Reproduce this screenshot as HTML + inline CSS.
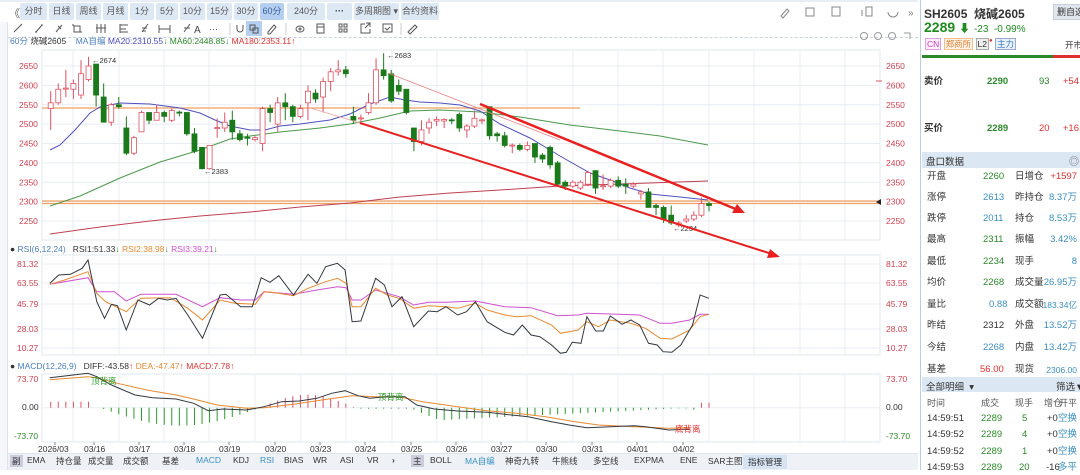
<!DOCTYPE html>
<html><head><meta charset="utf-8">
<style>
*{margin:0;padding:0;box-sizing:border-box}
body{width:1080px;height:470px;overflow:hidden;background:#fff;font-family:"Liberation Sans","Noto Sans CJK SC",sans-serif;font-size:9px;color:#333;position:relative}
.abs{position:absolute;white-space:nowrap}
.btn{position:absolute;top:3px;height:17px;background:#dde8f5;border-radius:2px;font-size:9px;color:#555;text-align:center;line-height:17px;white-space:nowrap}
.btn.sel{background:#b5cff0;color:#3a5f9a}
.rp{position:absolute;left:920px;top:0;width:160px;height:470px;border-left:1px solid #b9cde6}
.row{position:absolute;left:6px;width:150px;height:14px;font-size:9.5px;line-height:14px;white-space:nowrap}
.row span{position:absolute;top:0;white-space:nowrap;line-height:14px}
.row .rt{right:0}
.g{color:#2a8a2a}.r{color:#e03030}.b{color:#3a90c0}
.bt{position:absolute;top:455px;font-size:8.5px;white-space:nowrap}
</style></head><body>
<div class="abs" style="left:0;top:0;width:918px;height:2px;background:#e8eef6"></div>
<div class="abs" style="left:9px;top:5px;font-size:11px;color:#666">《</div>
<div class="btn" style="left:20px;width:27px">分时</div>
<div class="btn" style="left:49px;width:25px">日线</div>
<div class="btn" style="left:76px;width:25px">周线</div>
<div class="btn" style="left:103px;width:25px">月线</div>
<div class="btn" style="left:130px;width:24px">1分</div>
<div class="btn" style="left:156px;width:22px">5分</div>
<div class="btn" style="left:180px;width:25px">10分</div>
<div class="btn" style="left:207px;width:25px">15分</div>
<div class="btn" style="left:234px;width:24px">30分</div>
<div class="btn sel" style="left:260px;width:24px">60分</div>
<div class="btn" style="left:287px;width:38px">240分</div>
<div class="btn" style="left:327px;width:25px;font-weight:bold;color:#333">···</div>
<div class="btn" style="left:354px;width:45px">多周期图 ▾</div>
<div class="btn" style="left:401px;width:38px">合约资料</div>
<div class="abs" style="left:0;top:22px;width:8px;height:448px;background:#f4f6f9;border-right:1px solid #dde4ee"></div>
<svg class="abs" style="left:8px;top:20px" width="420" height="18" stroke="#555" fill="none" stroke-width="1">
<line x1="6" y1="12" x2="14" y2="4"/>
<path d="M28 12l6-7M27 12h2M33 5h2"/>
<path d="M48 12l6-7M50 6l3 3"/>
<rect x="66" y="6" width="6" height="6"/><path d="M64 5h2M72 12h2"/>
<path d="M89 4v9M93 4v9M97 4v9M88 8h10"/>
<path d="M112 5h8M112 9h6M112 12h8M112 4v9"/>
<path d="M134 12l6-8M134 8h5M134 11h4"/>
<path d="M151 5v8M162 5v8M151 9h11"/>
<path d="M176 12l6-8M176 8h6"/>
<text x="186" y="13" fill="#444" stroke="none" font-size="10">A</text>
<text x="201" y="12" fill="#444" stroke="none" font-size="9">···</text>
<line x1="222" y1="3" x2="222" y2="15" stroke="#ccc"/>
<path d="M229 5v4a3 3 0 006 0V5"/>
<rect x="238" y="1" width="16" height="15" fill="#b5cff0" stroke="none"/><rect x="242" y="5" width="5" height="5"/><rect x="245" y="8" width="5" height="5"/>
<path d="M260 12l6-7 2 2-6 7h-2z"/>
<line x1="278" y1="3" x2="278" y2="15" stroke="#ccc"/>
<ellipse cx="292" cy="9" rx="4" ry="3"/><circle cx="292" cy="9" r="1"/>
<rect x="309" y="4" width="7" height="9"/><path d="M309 7h7"/>
<rect x="331" y="4" width="3" height="3"/><rect x="336" y="4" width="3" height="3"/><rect x="331" y="9" width="3" height="3"/><rect x="336" y="9" width="3" height="3"/>
<path d="M357 4h-4v9h9v-4M358 3h4v4M362 3l-5 5"/>
<rect x="375" y="4" width="9" height="8"/><path d="M377 8l2 2 3-3"/>
<line x1="393" y1="3" x2="393" y2="15" stroke="#ccc"/>
<path d="M400 12l7-7 2 2-7 7z"/>
</svg>
<svg class="abs" style="left:776px;top:4px" width="142" height="16" stroke="#888" fill="none">
<path d="M5 12l6-7 2 2-6 7z"/><rect x="30" y="4" width="8" height="8"/><rect x="56" y="3" width="8" height="9"/><path d="M90 3h6v9h-6zM86 6v6"/>
<path d="M112 8a5 5 0 1010 0"/><text x="132" y="12" font-size="10" fill="#777" stroke="none">»</text>
</svg>
<div class="abs" style="left:8px;top:37px;width:910px;border-top:1px dashed #c8d2e0"></div>
<div class="abs" style="left:10px;top:35px;font-size:8.5px"><span style="color:#4a7fc0">60分</span> 烧碱2605 &nbsp; &nbsp;<span style="color:#4a7fc0">MA自编</span> <span style="color:#4a4abf">MA20:2310.55</span><span class="g">↓</span> <span class="g">MA60:2448.85</span><span class="g">↓</span> <span class="r">MA180:2353.11</span><span class="r">↑</span></div>
<svg class="abs" style="left:858px;top:30px" width="60" height="12" stroke="#999" fill="none"><circle cx="6" cy="6" r="3.5"/><circle cx="20" cy="6" r="3.5"/><circle cx="34" cy="6" r="3.5"/><path d="M46 3h6v6"/></svg>

<svg id="ch" class="abs" style="left:0;top:0" width="918" height="470"></svg>

<div class="abs" style="left:10px;top:244px;font-size:8.5px"><span style="color:#333">●</span> <span style="color:#4a7fc0">RSI(6,12,24)</span> &nbsp; RSI1:51.33<span class="g">↓</span> <span style="color:#e88a30">RSI2:38.98</span><span class="g">↓</span> <span style="color:#d050d0">RSI3:39.21</span><span class="g">↓</span></div>
<div class="abs" style="left:10px;top:361px;font-size:8.5px"><span style="color:#333">●</span> <span style="color:#4a7fc0">MACD(12,26,9)</span> &nbsp; DIFF:-43.58<span class="r">↑</span> <span style="color:#e88a30">DEA:-47.47</span><span class="r">↑</span> <span class="r">MACD:7.78↑</span></div>
<div class="abs" style="left:8px;top:453px;width:910px;height:17px;background:#eef2f7;border-top:1px solid #dde4ee"></div>
<span class="bt" style="left:10px;background:#ccd;padding:0 2px">副</span>
<span class="bt" style="left:27px">EMA</span><span class="bt" style="left:56px">持仓量</span><span class="bt" style="left:88px">成交量</span><span class="bt" style="left:123px">成交额</span><span class="bt" style="left:162px">基差</span><span class="bt b" style="left:196px">MACD</span><span class="bt" style="left:233px">KDJ</span><span class="bt b" style="left:260px">RSI</span><span class="bt" style="left:284px">BIAS</span><span class="bt" style="left:313px">WR</span><span class="bt" style="left:340px">ASI</span><span class="bt" style="left:367px">VR</span><span class="bt" style="left:392px;font-weight:bold">›</span>
<span class="bt" style="left:411px;background:#ccd;padding:0 2px">主</span>
<span class="bt" style="left:430px">BOLL</span><span class="bt b" style="left:465px">MA自编</span><span class="bt" style="left:505px">神奇九转</span><span class="bt" style="left:552px">牛熊线</span><span class="bt" style="left:593px">多空线</span><span class="bt" style="left:634px">EXPMA</span><span class="bt" style="left:680px">ENE</span><span class="bt" style="left:708px">SAR主图</span>
<div class="abs" style="left:743px;top:455px;height:14px;width:44px;background:#d5e3f3;font-size:8.5px;text-align:center;line-height:14px">指标管理</div>

<div class="rp">
<div class="abs" style="left:3px;top:5px;font-size:12px;font-weight:bold;color:#333">SH2605 &nbsp;烧碱2605</div>
<div class="abs" style="left:132px;top:4px;width:35px;height:16px;background:#e0e6ee;border:1px solid #c8d0dc;font-size:9px;text-align:center;line-height:14px">删自选</div>
<div class="abs" style="left:3px;top:19px;font-size:14px;font-weight:bold;color:#1e8c1e">2289 <span style="font-size:11px">⬇</span> <span style="font-size:10px;font-weight:normal">-23 &nbsp;-0.99%</span></div>
<div class="abs" style="left:4px;top:38px;font-size:8.5px"><span style="color:#d040c0;border:1px solid #e0a0e0;background:#fbeefb;padding:0 1px">CN</span> <span style="color:#e08030;border:1px solid #f0c090;background:#fdf3e8;padding:0 1px">郑商所</span> <span style="border:1px solid #aaa;background:#eee;padding:0 1px">L2</span><span class="r" style="font-size:6px;vertical-align:top">●</span> <span style="color:#3a7ac0;border:1px solid #9ac;background:#e8f0fb;padding:0 1px">主力</span></div>
<div class="abs" style="left:144px;top:39px;font-size:8.5px">开市</div>
<div class="abs" style="left:1px;top:55px;width:131px;height:3px;background:#2a8a2a"></div>
<div class="abs" style="left:132px;top:55px;width:28px;height:3px;background:#e03030"></div>
<div class="row" style="top:75px;left:3px;width:155px"><span style="font-weight:bold">卖价</span><span class="g" style="left:63px;font-weight:bold">2290</span><span class="g" style="left:115px">93</span><span class="r rt">+54</span></div>
<div class="row" style="top:122px;left:3px;width:155px"><span style="font-weight:bold">买价</span><span class="g" style="left:63px;font-weight:bold">2289</span><span class="r" style="left:115px">20</span><span class="r rt">+16</span></div>
<div class="abs" style="left:1px;top:152px;width:159px;height:16px;background:#dce7f4"></div>
<div class="abs" style="left:5px;top:154px;font-size:9.5px">盘口数据</div>
<div class="abs" style="left:148px;top:153px;font-size:10px;color:#666">◎</div>
<div class="row" style="top:170px"><span>开盘</span><span class="g" style="left:56px">2260</span><span style="left:88px">日增仓</span><span class="r rt">+1597</span></div>
<div class="row" style="top:191px"><span>涨停</span><span class="b" style="left:56px">2613</span><span style="left:88px">昨持仓</span><span class="b rt">8.37万</span></div>
<div class="row" style="top:212px"><span>跌停</span><span class="b" style="left:56px">2011</span><span style="left:88px">持仓</span><span class="b rt">8.53万</span></div>
<div class="row" style="top:233px"><span>最高</span><span class="g" style="left:56px">2311</span><span style="left:88px">振幅</span><span class="b rt">3.42%</span></div>
<div class="row" style="top:255px"><span>最低</span><span class="g" style="left:56px">2234</span><span style="left:88px">现手</span><span class="b rt">8</span></div>
<div class="row" style="top:276px"><span>均价</span><span class="g" style="left:56px">2268</span><span style="left:88px">成交量</span><span class="b rt">26.95万</span></div>
<div class="row" style="top:298px"><span>量比</span><span class="b" style="left:62px">0.88</span><span style="left:88px">成交额</span><span class="b rt" style="font-size:8.5px">183.34亿</span></div>
<div class="row" style="top:319px"><span>昨结</span><span style="left:56px">2312</span><span style="left:88px">外盘</span><span class="b rt">13.52万</span></div>
<div class="row" style="top:341px"><span>今结</span><span class="b" style="left:56px">2268</span><span style="left:88px">内盘</span><span class="b rt">13.42万</span></div>
<div class="row" style="top:363px"><span>基差</span><span class="r" style="left:53px">56.00</span><span style="left:88px">现货</span><span class="b rt" style="font-size:8.5px">2306.00</span></div>
<div class="abs" style="left:1px;top:377px;width:159px;height:15px;background:#dce7f4"></div>
<div class="abs" style="left:5px;top:379px;font-size:9.5px">全部明细 &nbsp;▾</div>
<div class="abs" style="left:135px;top:379px;font-size:9.5px">筛选▼</div>
<div class="row" style="top:396px;color:#555;font-size:9px"><span>时间</span><span style="left:54px">成交</span><span style="left:88px">现手</span><span style="left:117px">增仓</span><span class="rt">开平</span></div>
<div class="row" style="top:412px"><span>14:59:51</span><span class="g" style="left:54px">2289</span><span class="g" style="left:95px">5</span><span style="left:120px">+0</span><span class="b rt">空换</span></div>
<div class="row" style="top:428px"><span>14:59:52</span><span class="g" style="left:54px">2289</span><span class="g" style="left:95px">4</span><span style="left:120px">+0</span><span class="b rt">空换</span></div>
<div class="row" style="top:445px"><span>14:59:52</span><span class="g" style="left:54px">2289</span><span class="g" style="left:95px">1</span><span style="left:120px">+0</span><span class="b rt">空换</span></div>
<div class="row" style="top:461px"><span>14:59:53</span><span class="g" style="left:54px">2289</span><span class="g" style="left:92px">20</span><span style="left:119px">-16</span><span class="b rt">多平</span></div>
</div>

<script>
var s=document.getElementById('ch'),h='';
function Y(p){return 66+(2650-p)*0.3875}
h+='<rect x="42" y="50" width="838" height="190" fill="none" stroke="#e3e8ef"/>';
h+='<rect x="42" y="255" width="838" height="100" fill="none" stroke="#e3e8ef"/>';
h+='<rect x="42" y="374" width="838" height="68" fill="none" stroke="#e3e8ef"/>';
var gx=[73,119,164,209,255,301,346,392,437,482,527,573,618,663,709,754,800,845];
gx.forEach(function(x){h+='<line x1="'+x+'" y1="50" x2="'+x+'" y2="240" stroke="#e8edf3"/><line x1="'+x+'" y1="255" x2="'+x+'" y2="355" stroke="#e8edf3"/><line x1="'+x+'" y1="374" x2="'+x+'" y2="442" stroke="#e8edf3"/>';});
for(var p=2250;p<=2650;p+=50){var y=Y(p);h+='<line x1="42" y1="'+y+'" x2="880" y2="'+y+'" stroke="#e8edf3"/><text x="19" y="'+(y+3)+'" fill="#d04050" font-size="8.5">'+p+'</text><text x="886" y="'+(y+3)+'" fill="#d04050" font-size="8.5">'+p+'</text>';}
[[81.32,264],[63.55,283],[45.79,304],[28.03,329],[10.27,348]].forEach(function(a){h+='<line x1="42" y1="'+a[1]+'" x2="880" y2="'+a[1]+'" stroke="#e8edf3"/><text x="17" y="'+(a[1]+3)+'" fill="#d04050" font-size="8.5">'+a[0].toFixed(2)+'</text><text x="886" y="'+(a[1]+3)+'" fill="#d04050" font-size="8.5">'+a[0].toFixed(2)+'</text>';});
h+='<line x1="42" y1="407.7" x2="880" y2="407.7" stroke="#e8edf3"/>';
h+='<text x="17" y="382" fill="#d04050" font-size="8.5">73.70</text><text x="886" y="382" fill="#d04050" font-size="8.5">73.70</text>';
h+='<text x="22" y="410" fill="#333" font-size="8.5">0.00</text><text x="886" y="410" fill="#333" font-size="8.5">0.00</text>';
h+='<text x="14" y="439" fill="#2a8a2a" font-size="8.5">-73.70</text><text x="886" y="439" fill="#2a8a2a" font-size="8.5">-73.70</text>';
var lb=['2026/03','03/16','03/17','03/18','03/19','03/20','03/23','03/24','03/25','03/26','03/27','03/30','03/31','04/01','04/02'];
lb.forEach(function(t,i){var x=[55,97,142,187,232,278,323,368,414,459,504,549,595,640,686][i];h+='<line x1="'+(x-3+(i==0?3:0))+'" y1="442" x2="'+(x-3+(i==0?3:0))+'" y2="445" stroke="#888"/><text x="'+(x-13-(i==0?4:0))+'" y="452" fill="#333" font-size="8.5">'+t+'</text>';});
h+='<line x1="42" y1="108" x2="580" y2="108" stroke="#f0a060" stroke-width="1.2"/>';
h+='<line x1="42" y1="201" x2="880" y2="201" stroke="#f0a060" stroke-width="1.2"/><line x1="42" y1="203.5" x2="880" y2="203.5" stroke="#f0a060" stroke-width="1.2"/>';
function pl(pts,c,w){h+='<polyline fill="none" stroke="'+c+'" stroke-width="'+(w||1)+'" points="'+pts.map(function(a){return a.join(',')}).join(' ')+'"/>';}
pl([[50,234],[100,227],[150,221],[200,216],[250,212],[300,207],[350,203],[400,197],[450,193],[500,190],[560,186],[620,184],[708,181]],'#c04050');
pl([[50,206],[80,196],[120,178],[160,162],[200,150],[230,139],[250,136],[280,132],[320,128],[350,124],[380,118],[410,111],[440,110],[480,112],[520,117],[570,125],[620,131],[660,136],[708,145]],'#4a9a4a');
pl([[50,150],[60,145],[75,130],[90,113],[100,107],[120,103],[150,104],[180,108],[200,113],[215,120],[230,126],[250,130],[265,130],[280,126],[300,124],[330,120],[350,114],[370,104],[390,97],[405,100],[420,102],[440,103],[460,105],[480,111],[500,124],[530,138],[560,156],[590,173],[610,180],[630,188],[650,194],[680,197],[708,200]],'#5050c0');
var C=[[2540,2555,2585,2485],[2555,2590,2605,2550],[2591,2593,2640,2570],[2590,2605,2615,2565],[2575,2630,2665,2565],[2615,2650,2674,2610],[2655,2575,2655,2545],[2570,2505,2605,2505],[2505,2550,2555,2495],[2550,2545,2570,2540],[2490,2425,2520,2420],[2425,2465,2470,2420],[2480,2530,2535,2480],[2530,2510,2530,2500],[2510,2530,2550,2510],[2530,2520,2535,2505],[2510,2535,2540,2505],[2531,2529,2535,2520],[2530,2475,2530,2470],[2475,2430,2490,2425],[2440,2385,2440,2383],[2385,2445,2445,2383],[2489,2491,2515,2465],[2490,2505,2530,2480],[2510,2480,2535,2460],[2475,2460,2485,2455],[2466,2464,2475,2445],[2460,2465,2470,2455],[2450,2540,2545,2430],[2540,2530,2550,2505],[2500,2555,2570,2480],[2555,2545,2580,2510],[2545,2520,2550,2505],[2520,2540,2550,2515],[2555,2585,2600,2510],[2580,2565,2590,2555],[2570,2610,2620,2530],[2610,2635,2645,2585],[2635,2640,2665,2625],[2640,2630,2650,2620],
[2520,2510,2545,2500],[2514,2516,2525,2505],[2530,2555,2580,2525],[2555,2640,2670,2550],[2640,2625,2683,2615],[2630,2560,2640,2555],[2600,2585,2615,2575],[2590,2530,2590,2525],[2490,2455,2490,2430],[2455,2485,2510,2445],[2490,2505,2515,2475],[2508,2512,2520,2495],[2508,2512,2515,2490],[2511,2509,2515,2500],[2525,2490,2530,2480],
[2485,2495,2500,2465],[2495,2515,2535,2490],[2509,2511,2515,2500],[2545,2470,2545,2460],[2475,2470,2480,2455],[2470,2445,2480,2440],[2444,2446,2450,2425],[2445,2435,2450,2430],[2435,2445,2455,2430],[2450,2415,2450,2400],[2420,2410,2425,2400],[2440,2395,2445,2385],[2400,2345,2405,2340],[2350,2340,2355,2330],[2340,2350,2355,2335],[2335,2350,2355,2330],[2345,2375,2380,2340],[2380,2335,2380,2320],[2339,2341,2370,2330],[2340,2355,2360,2335],[2355,2340,2365,2335],[2345,2340,2360,2320],[2340,2345,2350,2335],[2320,2325,2330,2305],[2325,2285,2335,2285],[2290,2285,2295,2265],[2285,2255,2290,2245],[2265,2245,2290,2240],[2240,2245,2250,2234],[2250,2255,2265,2245],[2255,2265,2275,2250],[2265,2295,2310,2260],[2295,2290,2300,2275]];
var n=C.length;
C.forEach(function(c,i){var x=50.7+i*(709-50.7)/(n-1);var up=c[1]>c[0];var col=up?'#e05060':'#1a7a1a';
var t=Y(Math.max(c[0],c[1])),b=Y(Math.min(c[0],c[1]));if(b-t<1)b=t+1;
h+='<line x1="'+x+'" y1="'+Y(c[2])+'" x2="'+x+'" y2="'+t+'" stroke="'+col+'"/><line x1="'+x+'" y1="'+b+'" x2="'+x+'" y2="'+Y(c[3])+'" stroke="'+col+'"/>';
h+='<rect x="'+(x-2.5)+'" y="'+t+'" width="5" height="'+(b-t)+'" fill="'+(up?'#fff':col)+'" stroke="'+col+'" stroke-width="0.8"/>';});
h+='<text x="92" y="63" font-size="7.5" fill="#333">←2674</text><text x="204" y="174" font-size="7.5" fill="#333">←2383</text><text x="387" y="58" font-size="7.5" fill="#333">←2683</text><text x="673" y="231" font-size="7.5" fill="#333">←2234</text>';
h+='<line x1="388" y1="73" x2="560" y2="140" stroke="#f08080" stroke-width="0.8"/>';
h+='<line x1="307" y1="107" x2="360" y2="123" stroke="#f0a0a0" stroke-width="0.8"/>';
h+='<line x1="480" y1="104" x2="738" y2="210" stroke="#e82020" stroke-width="2.5"/><polygon points="745,213 732,213 737,204" fill="#e82020"/>';
h+='<line x1="360" y1="123" x2="772" y2="254" stroke="#e82020" stroke-width="2"/><polygon points="780,257 767,258 770,249" fill="#e82020"/>';
h+='<line x1="876" y1="81" x2="882" y2="81" stroke="#e05060"/><polygon points="876,202 881,199 881,205" fill="#222"/>';
function Z(a){return a.map(function(p){return [(p[0]/1.704).toFixed(1),(245+p[1]/3).toFixed(1)]})}
pl(Z([[85,118],[150,98],[165,140],[195,140],[215,168],[240,148],[300,148],[345,185],[375,158],[410,165],[435,165],[450,140],[500,148],[540,135],[575,125],[590,128],[600,165],[615,165],[640,135],[680,155],[705,180],[730,172],[760,172],[810,168],[860,185],[905,188],[950,212],[985,210],[1000,205],[1040,207],[1090,210],[1125,235],[1145,235],[1175,225],[1193,208],[1208,208]]),'#d050d0');
pl(Z([[85,118],[110,105],[150,80],[165,145],[180,170],[215,200],[240,160],[290,158],[320,190],[345,225],[375,165],[400,175],[435,178],[450,140],[475,145],[500,152],[525,130],[555,110],[575,100],[590,115],[600,185],[615,185],[640,130],[660,150],[680,160],[705,190],[730,182],[760,185],[780,190],[810,175],[830,195],[860,210],[880,215],[905,212],[940,240],[955,265],[985,255],[1000,230],[1020,245],[1040,225],[1075,235],[1100,250],[1125,280],[1145,282],[1175,255],[1193,215],[1208,208]]),'#e88a30');
pl(Z([[85,115],[100,90],[120,88],[140,70],[150,45],[165,170],[178,220],[190,178],[200,182],[215,255],[235,165],[255,180],[270,160],[285,165],[300,160],[320,210],[345,280],[375,150],[385,148],[410,185],[430,185],[445,98],[460,112],[475,92],[500,150],[525,88],[540,115],[555,65],[575,55],[588,75],[600,230],[615,228],[640,100],[655,120],[668,185],[685,155],[705,245],[730,198],[745,200],[760,185],[780,210],[795,200],[810,170],[830,230],[860,262],[875,270],[890,240],[905,270],[920,275],[940,300],[955,325],[965,322],[975,292],[990,295],[1000,215],[1015,258],[1028,258],[1040,213],[1060,238],[1075,225],[1090,240],[1105,295],[1120,300],[1130,320],[1145,322],[1160,300],[1180,240],[1193,150],[1208,160]]),'#333840');
for(var i=0;i<n;i++){var x=50.7+i*(709-50.7)/(n-1),v;
 if(x<90)v=6;else if(x<100)v=0;else if(x<260)v=-18*Math.sin((x-100)/160*Math.PI);else if(x<355)v=13*Math.sin((x-260)/95*Math.PI);else if(x<410)v=-1;else if(x<690)v=-14*Math.max(0.05,(1-(x-410)/280))*(x<440?(x-410)/30:1);else v=(x>700?5:-2);
 h+='<line x1="'+x+'" y1="407.7" x2="'+x+'" y2="'+(407.7-v)+'" stroke="'+(v>0?'#e05060':'#2a9a2a')+'"/>';}
pl(Z([[85,404],[150,395],[165,398],[200,415],[250,435],[300,450],[330,462],[370,480],[420,490],[450,488],[500,478],[560,462],[600,452],[640,455],[680,455],[720,470],[780,485],[830,497],[880,505],[930,515],[980,530],[1020,540],[1080,545],[1140,550],[1175,548]]),'#e88a30');
pl(Z([[85,398],[150,385],[165,395],[190,420],[230,450],[260,458],[300,462],[330,475],[355,497],[380,492],[420,495],[450,485],[480,470],[510,468],[540,460],[565,445],[588,437],[610,452],[630,460],[660,455],[690,455],[710,480],[740,492],[780,498],[830,502],[860,508],[900,515],[940,530],[970,540],[1000,548],[1040,545],[1080,542],[1100,545],[1140,555],[1175,552]]),'#333840');
h+='<text x="91" y="384" font-size="8.5" fill="#2a9a2a">顶背离</text><text x="378" y="400" font-size="8.5" fill="#2a9a2a">顶背离</text><text x="675" y="432" font-size="8.5" fill="#e03030">底背离</text>';
s.innerHTML=h;
</script>
</body></html>
